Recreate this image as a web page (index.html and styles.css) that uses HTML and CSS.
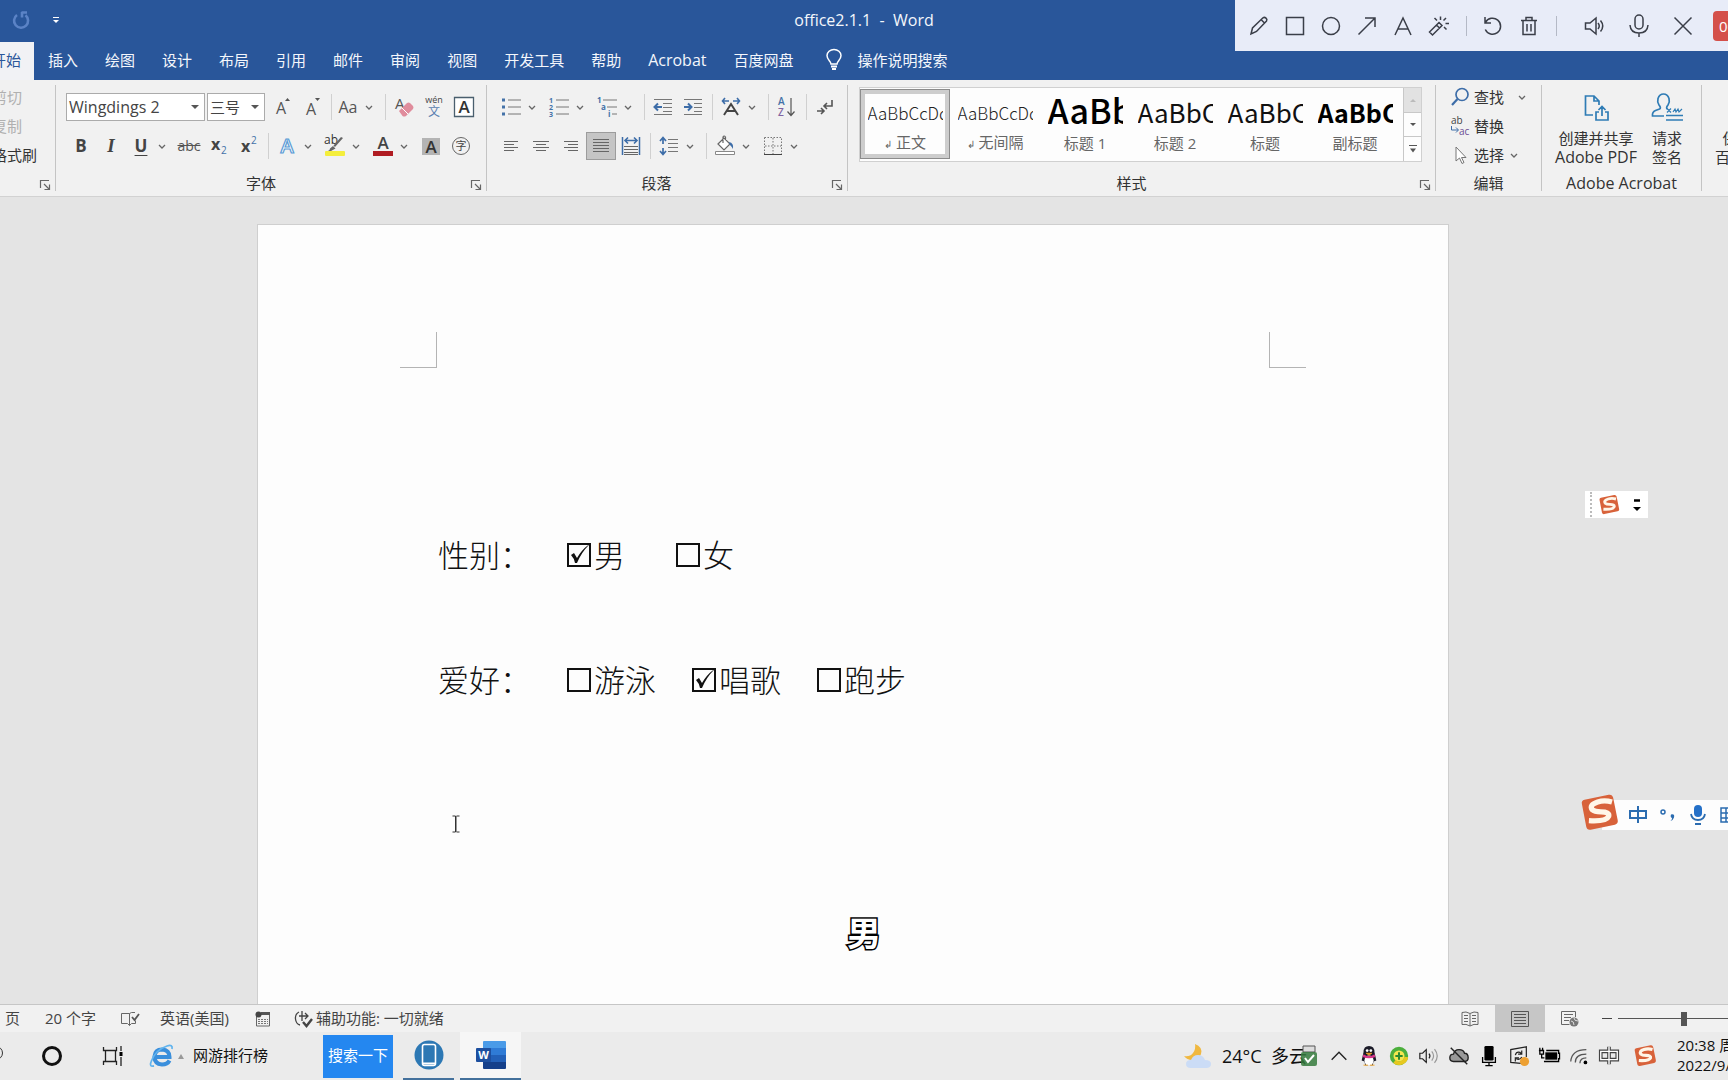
FILE: index.html
```html
<!DOCTYPE html>
<html lang="zh-CN">
<head>
<meta charset="utf-8">
<title>office2.1.1 - Word</title>
<link rel="stylesheet" href="styles.css">
</head>
<body>
<svg class="defs" aria-hidden="true">
  <symbol id="caret" viewBox="0 0 12 12"><path d="M3 5l3 3 3-3" fill="none" stroke="#666" stroke-width="1.3"/></symbol>
  <symbol id="launch" viewBox="0 0 12 12"><path d="M1.500 9V1.500H10M5 5l5 5M10.500 5.500v5h-5" fill="none" stroke="#666" stroke-width="1.2"/></symbol>
  <symbol id="sogou" viewBox="0 0 40 40"><path d="M5 8q-3 .7-2.400 3.600l4 21q.7 3.200 4 2.600l22-4.600q3.200-.8 2.600-4L31 6q-.8-3.200-4-2.600z" fill="#d8623a"/><path d="M30 10q-7-2-13 0-8 2.500-5 7 2 2 8 2 8 0 7 4-2 5-18 4" fill="none" stroke="#fff6e8" stroke-width="4.800"/></symbol>
</svg>

<header class="header">
  <div class="titlebar">
    <div class="quick">
      <button class="plain" aria-label="重复"><svg width="18" height="18" viewBox="0 0 18 18"><path d="M5 4a7 7 0 1 0 8.500.3M10 1v5.500M9.500 1.500H15" fill="none" stroke="#5b83c6" stroke-width="2.600"/></svg></button>
      <button class="plain" aria-label="自定义"><svg width="8" height="8" viewBox="0 0 8 8"><path d="M1 1.500h6" stroke="#fff"/><path d="M1 4h6L4 7z" fill="#fff"/></svg></button>
    </div>
    <div class="title">office2.1.1&nbsp; -&nbsp; Word</div>
  </div>
  <nav class="tabs">
    <button class="tab active">开始</button><button class="tab">插入</button><button class="tab">绘图</button><button class="tab">设计</button><button class="tab">布局</button><button class="tab">引用</button><button class="tab">邮件</button><button class="tab">审阅</button><button class="tab">视图</button><button class="tab">开发工具</button><button class="tab">帮助</button><button class="tab latin">Acrobat</button><button class="tab">百度网盘</button>
    <button class="tab tell"><svg width="18" height="22" viewBox="0 0 18 22"><path d="M6 15c0-3-4-4-4-8.500a7 6 0 0 1 14 0C16 11 12 12 12 15z" fill="none" stroke="#fff" stroke-width="1.500"/><path d="M6 17.500h6M7 20h4" stroke="#fff" stroke-width="1.800"/></svg>操作说明搜索</button>
  </nav>
</header>

<div class="recorder">
  <button class="tool" aria-label="画笔"><svg width="20" height="20" viewBox="0 0 20 20"><path d="M2 18l1.500-6L14 1.800q1.500-1 3 .3t.5 3L7.500 15.500zM12.500 4l3.500 3.500"/></svg></button>
  <button class="tool" aria-label="矩形"><svg width="20" height="20" viewBox="0 0 20 20"><path d="M1.500 1.500h17v17h-17z"/></svg></button>
  <button class="tool" aria-label="圆形"><svg width="20" height="20" viewBox="0 0 20 20"><circle cx="10" cy="10" r="8.500"/></svg></button>
  <button class="tool" aria-label="箭头"><svg width="20" height="20" viewBox="0 0 20 20"><path d="M1.500 18.500l16-16M8 2h10v9"/></svg></button>
  <button class="tool" aria-label="文字"><svg width="20" height="20" viewBox="0 0 20 20"><path d="M2 19L10 2l8 17M5 13h10"/></svg></button>
  <button class="tool" aria-label="魔棒"><svg width="22" height="20" viewBox="0 0 22 20"><path d="M1.500 16L11 6.500l3 3L4.500 19zM8.500 9l3 3M12.500.5V4M6.500 2l2.500 2.500M18 2l-2.500 2.500M17.500 7.500H21M16 11l2.500 2.500"/></svg></button>
  <span class="bar"></span>
  <button class="tool" aria-label="撤销"><svg width="20" height="20" viewBox="0 0 20 20"><path d="M2 1v6h6M2.500 6.500a8 8 0 1 1-.2 7"/></svg></button>
  <button class="tool" aria-label="删除"><svg width="18" height="20" viewBox="0 0 18 20"><path d="M1 4.500h16M3 5v13.500h12V5M6 4V1.500h6V4M7 8v7.500M11 8v7.500"/></svg></button>
  <span class="bar"></span>
  <button class="tool wide first" aria-label="声音"><svg width="22" height="20" viewBox="0 0 22 20"><path d="M1.500 7v6H6l6 5V2L6 7zM14 7q2.500 3 0 6M16.500 4.500q4.500 5.500 0 11"/></svg></button>
  <button class="tool wide" aria-label="麦克风"><svg width="20" height="24" viewBox="0 0 20 24"><rect x="6" y="1" width="8" height="14" rx="4"/><path d="M1 11q.5 8 9 8t9-8M10 19v4"/></svg></button>
  <button class="tool wide" aria-label="关闭"><svg width="20" height="20" viewBox="0 0 20 20"><path d="M1.500 1.500l17 17M18.500 1.500l-17 17"/></svg></button>
  <span class="timer">00:00</span>
</div>

<main class="ribbon">
  <section class="group clip">
    <div class="stack">
      <button class="plain off">剪切</button>
      <button class="plain off">复制</button>
      <button class="plain">格式刷</button>
    </div>
    <div class="foot"><svg class="launch"><use href="#launch"/></svg></div>
  </section>

  <section class="group font">
    <div class="row">
      <button class="combo family">Wingdings 2<span class="tri"></span></button>
      <button class="combo size">三号<span class="tri"></span></button>
      <button class="cell first" aria-label="增大字号"><svg width="22" height="24" viewBox="0 0 22 24"><text x="3" y="19" class="ga">A</text><path d="M12 6l2.500-3L17 6z" fill="#555"/></svg></button>
      <button class="cell" aria-label="减小字号"><svg width="22" height="24" viewBox="0 0 22 24"><text x="3" y="20" class="ga">A</text><path d="M12 3l2.500 3L17 3z" fill="#555"/></svg></button>
      <span class="sep thin"></span>
      <button class="cell mid">Aa</button><button class="drop" aria-label="展开"><svg><use href="#caret"/></svg></button>
      <span class="sep"></span>
      <button class="cell" aria-label="清除格式"><svg width="22" height="24" viewBox="0 0 22 24"><text x="2" y="14" font-size="15" fill="#555">A</text><path d="M6 16l8-8q1.500-1 3 0l3 3q1 1.500 0 3l-7 7q-2 1-3.500 0z" fill="#e08c9c"/><path d="M9 13l6 6" stroke="#fff"/></svg></button>
      <button class="cell" aria-label="拼音"><svg width="22" height="24" viewBox="0 0 22 24"><text x="11" y="8" text-anchor="middle" font-size="9" fill="#444">wén</text><text x="11" y="21" text-anchor="middle" font-size="12" fill="#5a7fb0">文</text></svg></button>
      <button class="cell" aria-label="字符边框"><svg width="22" height="22" viewBox="0 0 22 22"><path d="M1.500 1.500h19v19h-19z" fill="#fff" stroke="#4a5f6e" stroke-width="1.300"/><text x="11" y="17" text-anchor="middle" font-size="17" font-weight="600" fill="#333">A</text></svg></button>
    </div>
    <div class="row">
      <button class="cell big b">B</button>
      <button class="cell big i">I</button>
      <button class="cell big u">U</button><button class="drop" aria-label="展开"><svg><use href="#caret"/></svg></button>
      <button class="cell s">abc</button>
      <button class="cell" aria-label="下标"><svg width="20" height="20" viewBox="0 0 20 20"><text x="2" y="14" font-size="16" font-weight="700" fill="#444">x</text><text x="12" y="18" font-size="10" fill="#4472a8">2</text></svg></button>
      <button class="cell" aria-label="上标"><svg width="20" height="20" viewBox="0 0 20 20"><text x="2" y="16" font-size="16" font-weight="700" fill="#444">x</text><text x="12" y="8" font-size="10" fill="#4472a8">2</text></svg></button>
      <span class="sep"></span>
      <button class="cell" aria-label="文本效果"><svg width="22" height="24" viewBox="0 0 22 24"><text x="11" y="19" text-anchor="middle" font-size="20" font-weight="600" fill="#fff" stroke="#5b9bd5" stroke-width="1.200">A</text></svg></button><button class="drop" aria-label="展开"><svg><use href="#caret"/></svg></button>
      <button class="cell" aria-label="突出显示"><svg width="24" height="24" viewBox="0 0 24 24"><text x="1" y="10" font-size="12" fill="#333">ab</text><path d="M20 4L12 13l-1.500-1.500L18 3zM10 12l2.500 2.500L8 17H5q2-1 2-2.500z" fill="#666"/><rect x="2" y="17" width="20" height="5" rx="1" fill="#f4ee3c"/></svg></button><button class="drop" aria-label="展开"><svg><use href="#caret"/></svg></button>
      <button class="cell" aria-label="字体颜色"><svg width="22" height="24" viewBox="0 0 22 24"><text x="11" y="15" text-anchor="middle" font-size="17" font-weight="600" fill="#444">A</text><path d="M1 17h20v5H1z" fill="#b01c22"/></svg></button><button class="drop" aria-label="展开"><svg><use href="#caret"/></svg></button>
      <button class="cell" aria-label="字符底纹"><svg width="18" height="20" viewBox="0 0 18 20"><path d="M0 2h18v17H0z" fill="#b4b4b4"/><text x="9" y="17" text-anchor="middle" font-size="17" font-weight="600" fill="#333">A</text></svg></button>
      <button class="cell" aria-label="带圈字符"><svg width="20" height="20" viewBox="0 0 20 20"><circle cx="10" cy="10" r="8.500" fill="none" stroke="#666"/><text x="10" y="14" text-anchor="middle" font-size="11" fill="#444">字</text></svg></button>
    </div>
    <div class="foot">字体<svg class="launch"><use href="#launch"/></svg></div>
  </section>

  <section class="group para">
    <div class="row">
      <button class="cell" aria-label="项目符号"><svg width="20" height="20" viewBox="0 0 20 20"><path d="M7 3h13M7 10h13M7 17h13" stroke="#777"/><path d="M1 3h3M1 10h3M1 17h3" stroke="#4472a8" stroke-width="3"/></svg></button><button class="drop" aria-label="展开"><svg><use href="#caret"/></svg></button>
      <button class="cell" aria-label="编号"><svg width="20" height="20" viewBox="0 0 20 20"><path d="M7 3h13M7 10h13M7 17h13" stroke="#777"/><g font-size="7" font-weight="700" fill="#4472a8"><text x="0" y="6">1</text><text x="0" y="13">2</text><text x="0" y="20">3</text></g></svg></button><button class="drop" aria-label="展开"><svg><use href="#caret"/></svg></button>
      <button class="cell" aria-label="多级列表"><svg width="20" height="20" viewBox="0 0 20 20"><path d="M6 3h14M10 10h10M15 17h5" stroke="#777"/><g font-size="8" font-weight="700" fill="#4472a8"><text x="0" y="6">1</text><text x="4" y="13">a</text><text x="11" y="20">i</text></g></svg></button><button class="drop" aria-label="展开"><svg><use href="#caret"/></svg></button>
      <span class="sep"></span>
      <button class="cell" aria-label="减少缩进"><svg width="20" height="18" viewBox="0 0 20 18"><path d="M1 1.500h18M10 5.500h9M10 9.500h9M10 13.500h9M1 16.500h18" stroke="#777"/><path d="M9 9H2M5 5.500L1.500 9 5 12.500" fill="none" stroke="#3d6da8" stroke-width="2"/></svg></button>
      <button class="cell" aria-label="增加缩进"><svg width="20" height="18" viewBox="0 0 20 18"><path d="M1 1.500h18M11 5.500h8M11 9.500h8M11 13.500h8M1 16.500h18" stroke="#777"/><path d="M1 9h7M5 5.500L8.500 9 5 12.500" fill="none" stroke="#3d6da8" stroke-width="2"/></svg></button>
      <span class="sep"></span>
      <button class="cell" aria-label="中文版式"><svg width="20" height="20" viewBox="0 0 20 20"><path d="M8 4H1.500M4 1L1.500 4 4 7M12 4h6.500M16 1l2.500 3L16 7" fill="none" stroke="#3d6da8" stroke-width="1.600"/><path d="M3 18L10 7l7 11M6 14h8" fill="none" stroke="#444" stroke-width="2"/></svg></button><button class="drop" aria-label="展开"><svg><use href="#caret"/></svg></button>
      <span class="sep"></span>
      <button class="cell" aria-label="排序"><svg width="20" height="20" viewBox="0 0 20 20"><text x="1" y="8" font-size="10" font-weight="600" fill="#4472a8">A</text><text x="1" y="19" font-size="10" font-weight="600" fill="#8064a2">Z</text><path d="M14 1v17M10.500 14.500L14 18.500l3.500-4" fill="none" stroke="#555" stroke-width="1.200"/></svg></button>
      <span class="sep"></span>
      <button class="cell" aria-label="编辑标记"><svg width="18" height="18" viewBox="0 0 18 18"><path d="M16 2v6H8M11 5L8 8l3 3M1 13h7M5 10l3 3-3 3" fill="none" stroke="#555" stroke-width="1.600"/></svg></button>
    </div>
    <div class="row">
      <button class="cell" aria-label="左对齐"><svg width="16" height="14" viewBox="0 0 16 14"><path d="M1 2.500h14M1 5.500h10M1 8.500h14M1 11.500h10" stroke="#666"/></svg></button>
      <button class="cell" aria-label="居中"><svg width="16" height="14" viewBox="0 0 16 14"><path d="M0 2.500h16M3 5.500h10M0 8.500h16M3 11.500h10" stroke="#666"/></svg></button>
      <button class="cell" aria-label="右对齐"><svg width="16" height="14" viewBox="0 0 16 14"><path d="M1 2.500h14M5 5.500h10M1 8.500h14M5 11.500h10" stroke="#666"/></svg></button>
      <button class="cell pressed" aria-label="两端对齐"><svg width="16" height="16" viewBox="0 0 16 16"><path d="M0 1.500h16M0 4.500h16M0 7.500h16M0 10.500h16M0 13.500h16" stroke="#666"/></svg></button>
      <button class="cell" aria-label="分散对齐"><svg width="20" height="20" viewBox="0 0 20 20"><path d="M1.500 1v18M18.500 1v18" stroke="#3d6da8" stroke-width="1.500"/><path d="M4 4.500h12M7 1.500l-3 3 3 3M13 1.500l3 3-3 3" fill="none" stroke="#3d6da8" stroke-width="1.600"/><path d="M3 10.500h14M3 13.500h14M3 16.500h14M3 18.500h14" stroke="#666"/></svg></button>
      <span class="sep"></span>
      <button class="cell" aria-label="行距"><svg width="20" height="20" viewBox="0 0 20 20"><path d="M9 3.500h10M9 7.500h10M9 11.500h10M9 15.500h10" stroke="#777"/><path d="M4 2v6M1 5l3-3.500L7 5M4 18v-6M1 15l3 3.500L7 15" fill="none" stroke="#3d6da8" stroke-width="1.700"/></svg></button><button class="drop" aria-label="展开"><svg><use href="#caret"/></svg></button>
      <span class="sep"></span>
      <button class="cell" aria-label="底纹"><svg width="22" height="22" viewBox="0 0 22 22"><path d="M4 9l6-6 6 6-6 6zM9 8V2q1-2 2.500 0v3" fill="#fff" stroke="#666" stroke-width="1.200"/><path d="M15 7q5 1 4 7-1-2-3-4z" fill="#3d6da8"/><path d="M1.500 16.500h19v3h-19z" fill="#fff" stroke="#888"/></svg></button><button class="drop" aria-label="展开"><svg><use href="#caret"/></svg></button>
      <button class="cell" aria-label="边框"><svg width="18" height="18" viewBox="0 0 18 18"><path d="M.5.500h17v17M.5.500v17M9 1v16M1 9h16" fill="none" stroke="#777" stroke-dasharray="1.500 1.500"/><path d="M0 17.500h18" stroke="#444"/></svg></button><button class="drop" aria-label="展开"><svg><use href="#caret"/></svg></button>
    </div>
    <div class="foot">段落<svg class="launch"><use href="#launch"/></svg></div>
  </section>

  <section class="group styles">
    <div class="gallery">
      <button class="style on"><span class="sample">AaBbCcDd</span><span class="name"><small>↲</small> 正文</span></button>
      <button class="style"><span class="sample">AaBbCcDd</span><span class="name"><small>↲</small> 无间隔</span></button>
      <button class="style"><span class="sample h1">AaBb</span><span class="name">标题 1</span></button>
      <button class="style"><span class="sample h2">AaBbC</span><span class="name">标题 2</span></button>
      <button class="style"><span class="sample h2">AaBbC</span><span class="name">标题</span></button>
      <button class="style"><span class="sample h2 bold">AaBbC</span><span class="name">副标题</span></button>
      <div class="scroller">
        <button aria-label="上" class="dim"><svg width="6" height="4" viewBox="0 0 6 4"><path d="M0 4l3-3 3 3z" fill="#bbb"/></svg></button>
        <button aria-label="下"><svg width="6" height="4" viewBox="0 0 6 4"><path d="M0 0l3 3 3-3z" fill="#555"/></svg></button>
        <button aria-label="更多"><svg width="8" height="8" viewBox="0 0 8 8"><path d="M0 .5h8" stroke="#555"/><path d="M1 3.500l3 4 3-4z" fill="#555"/></svg></button>
      </div>
    </div>
    <div class="foot">样式<svg class="launch"><use href="#launch"/></svg></div>
  </section>

  <section class="group edit">
    <div class="stack">
      <button class="plain"><svg width="20" height="20" viewBox="0 0 20 20"><circle cx="12" cy="7.500" r="6" fill="none" stroke="#3d6da8" stroke-width="1.700"/><path d="M7.500 12L2 18" stroke="#3d6da8" stroke-width="2.200"/></svg>查找<svg class="c gap"><use href="#caret"/></svg></button>
      <button class="plain"><svg width="20" height="20" viewBox="0 0 20 20"><text x="1" y="8" font-size="10" fill="#444">ab</text><text x="9" y="19" font-size="10" fill="#6a4c93">ac</text><path d="M1.500 10v4H8M6 11.500L8.500 14 6 16.500" fill="none" stroke="#3d6da8"/></svg>替换</button>
      <button class="plain"><svg width="20" height="20" viewBox="0 0 20 20"><path d="M6 2v14l3.500-3 2.500 5.500 2-1-2.500-5H16z" fill="#fff" stroke="#777"/></svg>选择<svg class="c"><use href="#caret"/></svg></button>
    </div>
    <div class="foot">编辑</div>
  </section>

  <section class="group acro">
    <div class="tiles">
      <button class="tile"><svg width="28" height="30" viewBox="0 0 28 30"><path d="M11 22H3.500V3H12l5 5v4M12 3v5h5M17 19h-3v8h12v-8h-3M20 23v-9M16.500 17L20 13.500l3.500 3.500" fill="none" stroke="#2f7cb5" stroke-width="1.700"/></svg>创建并共享<br><span class="latin">Adobe PDF</span></button>
      <button class="tile"><svg width="32" height="30" viewBox="0 0 32 30"><path d="M13 23H1.500q-.5-4 3-5.500l4-1.500q2-1-.5-4-2-3-1-6.500Q8.500 1 12.500 1T18 5.500q1 3.500-1 6.500-2.500 3-.5 4M15 22.500h17M15 27h17" fill="none" stroke="#2f7cb5" stroke-width="1.700"/><path d="M16 15.500l4 4M20 15.500l-4 4M22 19l2-3 1 3 2-3 1 3 3-3" fill="none" stroke="#2f7cb5" stroke-width="1.200"/></svg>请求<br>签名</button>
    </div>
    <div class="foot latin">Adobe Acrobat</div>
  </section>

  <section class="group pan">
    <button class="tile"><svg width="28" height="30"></svg>保存到<br>百度网盘</button>
  </section>
</main>

<div class="canvas">
  <article class="paper">
    <div class="marks"><i class="mark l"></i><i class="mark r"></i></div>
    <form class="form">
      <div class="line gender"><span class="q">性别：</span>
        <label><input type="checkbox" checked>男</label><label><input type="checkbox">女</label></div>
      <div class="line"><span class="q">爱好：</span>
        <label><input type="checkbox">游泳</label><label><input type="checkbox" checked>唱歌</label><label><input type="checkbox">跑步</label></div>
    </form>
    <svg class="ibeam" width="8" height="18" viewBox="0 0 8 18"><path d="M.5 1h3v16h-3M7.500 1h-3M4.500 17h3M4 1v16" fill="none" stroke="#333"/></svg>
  </article>
  <div class="subtitle">男</div>
  <div class="mini">
    <span class="grip"></span><svg width="24" height="24"><use href="#sogou"/></svg>
    <svg width="8" height="14" viewBox="0 0 8 14"><path d="M1 2.500h6" stroke="#000" stroke-width="2.500"/><path d="M0 9h8l-4 4z"/></svg>
  </div>
  <div class="ime">
    <svg class="logo" width="44" height="44"><use href="#sogou"/></svg>
    <svg width="18" height="18" viewBox="0 0 18 18"><path d="M1 5h16v7H1zM9 0v17" fill="none" stroke="#2b6cb0" stroke-width="2"/></svg>
    <svg width="18" height="18" viewBox="0 0 18 18"><circle cx="4" cy="6" r="2" fill="none" stroke="#2b6cb0" stroke-width="1.500"/><path d="M12 8.500q4-1 3 3-1 3-3.500 3.500 2-2 1.500-3-2-1-1-3.500z" fill="#2b6cb0"/></svg>
    <svg width="18" height="20" viewBox="0 0 18 20"><rect x="5" y="0" width="8" height="12" rx="4" fill="#2470c8"/><path d="M2 9q1 6 7 6t7-6M6 19h6" fill="none" stroke="#2b6cb0" stroke-width="1.800"/></svg>
    <svg width="18" height="18" viewBox="0 0 18 18"><path d="M2 2h15v14H2zM2 7h15M2 12h15M7 2v14M12 2v14" fill="none" stroke="#2b6cb0" stroke-width="1.500"/></svg>
  </div>
</div>

<footer class="status">
  <span class="page">页</span><span class="words">20 个字</span>
  <svg class="proof" width="20" height="16" viewBox="0 0 20 16"><path d="M9.500 2.500H1.500v10h6l2 2zM9.500 2.500l2-1H15M9.500 14.500l2-2h4v-3" fill="none" stroke="#666"/><path d="M12 6l2.500 3L19 3" fill="none" stroke="#555" stroke-width="1.800"/></svg>
  <span class="lang">英语(美国)</span>
  <svg class="macro" width="16" height="16" viewBox="0 0 16 16"><path d="M1.500 4v11h13V3.500H6" fill="none" stroke="#666"/><path d="M6 1h9v3H6z" fill="#555"/><circle cx="3.500" cy="3.500" r="3" fill="#444"/><path d="M3 8.500h10M3 10.500h10M3 12.500h10" stroke="#777" stroke-dasharray="2 1"/></svg>
  <svg class="acc" width="20" height="18" viewBox="0 0 20 18"><path d="M5 2Q1 4 1.500 9T6 15M8 1v6M5 6h9M11 3l3 3-3 3M8 7v4" fill="none" stroke="#444" stroke-width="1.300"/><path d="M9 12l3.500 4L18 9" fill="none" stroke="#444" stroke-width="2.400"/></svg>
  <span>辅助功能: 一切就绪</span>
  <div class="views">
    <button class="view" aria-label="阅读视图"><svg width="18" height="16" viewBox="0 0 18 16"><path d="M9 2.500Q5 0 1 1.500v12q4-1 8 1.500 4-2.500 8-1.500v-12Q13 0 9 2.500zM9 3v12M3 4.500h4M3 7.500h4M3 10.500h4M11 4.500h4M11 7.500h4M11 10.500h4" fill="none" stroke="#666"/></svg></button>
    <button class="view on" aria-label="页面视图"><svg width="18" height="16" viewBox="0 0 18 16"><path d="M.5.500h17v15H.5zM3 3.500h12M3 6.500h12M3 9.500h12M3 12.500h12" fill="none" stroke="#555"/></svg></button>
    <button class="view" aria-label="Web 视图"><svg width="18" height="16" viewBox="0 0 18 16"><path d="M14.500 6V.5H.5v13h8M3 3.500h9M3 6.500h7M3 9.500h5" fill="none" stroke="#666"/><circle cx="13" cy="11" r="4.500" fill="#777"/><path d="M10 10q3 0 3 4M13 7q0 3 4 3" fill="none" stroke="#ddd"/></svg></button>
    <span class="minus"></span>
    <input class="zoom" type="range" min="0" max="100" value="50" aria-label="缩放">
  </div>
</footer>

<footer class="taskbar">
  <span class="search"></span>
  <span class="ring"></span>
  <svg class="tv" width="20" height="20" viewBox="0 0 20 20"><path d="M.5 1v3.500h13V1M2.500 4.500v11M12.500 4.500v11M.5 19v-3.500h13V19M18 0v5M18 11v9" fill="none" stroke="#222" stroke-width="1.300"/><path d="M18 6v4" stroke="#000" stroke-width="3"/></svg>
  <svg class="ie" width="24" height="24" viewBox="0 0 24 24"><path d="M20.500 16.500Q18.500 20.500 13 20.500 5.500 20 5.500 12.500 6 5.500 13 5.500q7.500.5 7.500 7.500H7" fill="none" stroke="#3a8fdc" stroke-width="4"/><path d="M5 22q-5 1-3-4Q6 6 18 2q6-2 5 3" fill="none" stroke="#62b4ee" stroke-width="1.800"/></svg>
  <svg class="up" width="6" height="6" viewBox="0 0 6 6"><path d="M0 6l3-5 3 5z" fill="#999"/></svg>
  <span class="news">网游排行榜</span>
  <button class="go">搜索一下</button>
  <button class="app" aria-label="手机"><svg width="30" height="30" viewBox="0 0 30 30"><circle cx="15" cy="15" r="14.500" fill="#2c78b4"/><rect x="8.500" y="4.500" width="13" height="21" rx="2" fill="none" stroke="#fff" stroke-width="1.600"/><path d="M8 22.500h14v2H8z" fill="#fff"/></svg></button>
  <button class="app word" aria-label="Word"><svg width="30" height="28" viewBox="0 0 30 28"><path d="M7 1q0-1 1-1h21q1 0 1 1v6H7z" fill="#4a9be8"/><path d="M7 7h23v7H7z" fill="#2f7bd6"/><path d="M7 14h23v7H7z" fill="#2260b8"/><path d="M7 21h23v6q0 1-1 1H8q-1 0-1-1z" fill="#143f8a"/><rect y="7" width="15" height="14" rx="1" fill="#1d4f9f"/><text x="7.500" y="18" text-anchor="middle" font-size="11" font-weight="700" fill="#fff">W</text></svg></button>
  <div class="tray">
    <svg class="moon" width="28" height="26" viewBox="0 0 28 26"><path d="M12 1q8 3 6 10-2 6-9 6-5 0-8-4 6 1 9-3 3-4 2-9z" fill="#f0b840"/><path d="M8 25q-5 0-5-4t5-4q2-5 7-5t7 5q6 0 6 4t-5 4z" fill="#cbdcf6"/></svg>
    <span class="weather">24°C&nbsp; 多云<svg class="usb" width="16" height="22" viewBox="0 0 16 22"><path d="M2 1h12v6H2z" fill="#ddd" stroke="#555"/><rect y="7" width="16" height="14" rx="2" fill="#357a3c" fill-opacity=".85"/><path d="M4 13l3 4 6-7" fill="none" stroke="#fff" stroke-width="2"/></svg></span>
    <svg class="t" viewBox="0 0 24 24"><path d="M4 16l8-8 8 8" fill="none" stroke="#222" stroke-width="1.500"/></svg>
    <svg class="t" viewBox="0 0 24 24"><path d="M6 8q0-7 6-7t6 7l2 9-3 1-1 4H8l-1-4-3-1z" fill="#1b1b28"/><ellipse cx="12" cy="17" rx="5" ry="5.500" fill="#fff"/><path d="M6 10q6 4 12 0l1 3q-7 3-14 0z" fill="#d8378a"/><circle cx="10" cy="6" r="1.500" fill="#fff"/><circle cx="14" cy="6" r="1.500" fill="#fff"/><path d="M9 9h6l-3 2zM6 22h5M13 22h5" fill="#f0a020" stroke="#f0a020"/></svg>
    <svg class="t" viewBox="0 0 24 24"><circle cx="12" cy="12" r="8" fill="#f5e650" stroke="#4caf3c" stroke-width="4"/><path d="M20 13a8 8 0 0 1-13 5" fill="none" stroke="#e8c820" stroke-width="4"/><path d="M12 8v8M8 12h8" stroke="#2c8a30" stroke-width="2.200"/></svg>
    <svg class="t" viewBox="0 0 24 24"><path d="M2 9v6h3l4 4V5L5 9zM12 9.500q2 2.500 0 5" fill="none" stroke="#222" stroke-width="1.300"/><path d="M15 7q4 5 0 10M18 4.500q6 7.500 0 15" fill="none" stroke="#999" stroke-width="1.300"/></svg>
    <svg class="t" viewBox="0 0 24 24"><path d="M6 18q-4 0-4-4t4-4q1-5 6-5t6 4q4 0 4 5 0 4-4 4z" fill="#999" stroke="#222" stroke-width="1.500"/><path d="M3 3l18 18" stroke="#222" stroke-width="1.600"/></svg>
    <svg class="t" viewBox="0 0 24 24"><rect x="7" y="1" width="10" height="16" rx="1.500"/><path d="M5 13v6h14v-6M12 19v4M8 22.500h8" fill="none" stroke="#000" stroke-width="1.400"/></svg>
    <svg class="t" viewBox="0 0 24 24"><path d="M14 20L3 19V5l17-3v11" fill="none" stroke="#222" stroke-width="1.300"/><path d="M8 11q1-4 5-3l2 2M15 6v4h-4M15 13q-2 4-6 2M8 18v-4h4" fill="none" stroke="#222" stroke-width="1.300"/><circle cx="18" cy="18" r="5" fill="#eda032"/></svg>
    <svg class="t" viewBox="0 0 24 24"><path d="M8 8h13v8H8z"/><path d="M6.500 18h16v-3h1v-6h-1V6H9M1 6h5v4H2V6M2 3v3M5 3v3M4 10v4h3" fill="none" stroke="#000" stroke-width="1.400"/></svg>
    <svg class="t" viewBox="0 0 24 24"><path d="M3 18Q4 5 20 5M8 19Q8 10 20 10M13 20q0-6 7-6" fill="none" stroke="#555" stroke-width="1.400"/><circle cx="19" cy="19" r="2"/></svg>
    <svg class="t" viewBox="0 0 24 24"><path d="M3 7h18v9H3zM12 2v19" fill="none" stroke="#444" stroke-width="4"/><path d="M3 7h18v9H3zM12 2v19" fill="none" stroke="#fff" stroke-width="1.500"/></svg>
    <svg class="so" width="26" height="26"><use href="#sogou"/></svg>
    <div class="clock"><span>20:38 周二</span><span>2022/9/13</span></div>
  </div>
</footer>
</body>
</html>
```
FILE: styles.css
```css
* { box-sizing: border-box; }
body {
  margin: 0; height: 100vh; display: flex; flex-direction: column; overflow: hidden;
  font: 15px/20px "Open Sans", "Noto Sans CJK SC", sans-serif; color: #333; background: #e4e4e4;
  position: relative;
}
button { font: inherit; color: inherit; background: none; border: 0; padding: 0; margin: 0; white-space: nowrap; }
svg { display: block; flex: none; overflow: visible; }
.defs { position: absolute; width: 0; height: 0; }
.latin { font-size: 16px; }

.header { background: #29569a; color: #f4f7fc; flex: none; }
.titlebar { height: 42px; display: flex; align-items: center; justify-content: center; position: relative; }
.title { font-size: 16px; line-height: 38px; padding-bottom: 2px; }
.quick { position: absolute; left: 12px; top: 11px; display: flex; align-items: center; gap: 22px; }
.tabs { display: flex; height: 38px; }
.tab { padding: 0 13px 0 14px; line-height: 36px; height: 38px; padding-bottom: 2px; }
.tab.active { background: #f1f2f5; color: #2b579a; margin-left: -23px; }
.tab.tell { display: flex; align-items: center; gap: 15px; padding-left: 18px; }

.recorder {
  position: absolute; top: 0; right: 0; width: 493px; height: 51px; padding-left: 6px;
  display: flex; align-items: center; background: #e8ecf8; overflow: hidden;
}
.tool { width: 36px; flex: none; display: flex; justify-content: center; }
.tool svg { fill: none; stroke: #3a3e48; stroke-width: 1.5; }
.tool.wide { width: 44px; }
.tool.first { margin-left: 8px; }
.bar { width: 18px; height: 20px; flex: none; background: linear-gradient(#b4b9c6, #b4b9c6) center / 1px 100% no-repeat; }
.timer { margin-left: 8px; padding: 0 6px; height: 30px; line-height: 30px; border-radius: 4px; background: #d4504a; color: #fff; }

.ribbon { flex: none; display: flex; height: 117px; padding: 5px 0; background: #f1f1f1; border-bottom: 1px solid #d2d2d2; overflow: hidden; }
.group { flex: none; display: flex; flex-direction: column; border-right: 1px solid #c4c4c4; padding-top: 8px; position: relative; }
.foot { margin-top: auto; height: 13px; line-height: 11px; text-align: center; }
.launch { position: absolute; right: 4px; bottom: 0; width: 12px; height: 12px; }
.clip { width: 56px; padding-top: 0; }
.font { width: 431px; padding-left: 10px; }
.para { width: 361px; padding-left: 9px; }
.font .foot, .para .foot { padding-right: 30px; }
.styles { flex: 1; padding: 2px 13px 0 11px; }
.styles .foot { padding-right: 18px; }
.edit { width: 106px; padding-top: 0; }
.acro { width: 160px; }
.pan { width: 86px; margin-right: -60px; border: 0; }
.plain { display: flex; align-items: center; }
.stack { display: flex; flex-direction: column; gap: 9px; padding-top: 2px; }
.clip .stack { margin-left: -8px; }
.off { color: #b0b0b0; }
.edit .stack { padding-left: 14px; }
.edit .plain { gap: 4px; }
.edit .c { width: 12px; height: 12px; }
.edit .gap { margin-left: 8px; }

.row { display: flex; align-items: center; height: 28px; margin-bottom: 11px; }
.cell { width: 30px; height: 28px; flex: none; display: flex; align-items: center; justify-content: center; color: #555; }
.cell.first { margin-left: 4px; }
.drop { width: 12px; margin-right: 6px; flex: none; }
.drop svg { width: 12px; height: 12px; }
.sep { width: 8px; height: 26px; flex: none; background: linear-gradient(#d0d0d0, #d0d0d0) center / 1px 100% no-repeat; }
.sep.thin { width: 4px; }
.ga { font-size: 16px; fill: #555; }
.mid { font-size: 16px; }
.big { font-size: 17px; font-weight: 700; color: #444; }
.i { font-family: "Liberation Serif", serif; font-style: italic; font-size: 19px; }
.u { text-decoration: underline; text-underline-offset: 3px; }
.s { font-size: 14px; text-decoration: line-through; }
.pressed { background: #c5c5c5; border: 1px solid #9c9c9c; }
.combo { height: 28px; border: 1px solid #ababab; background: #fff; display: flex; align-items: center; justify-content: space-between; padding: 0 5px 0 2px; color: #444; flex: none; }
.family { width: 139px; font-size: 16px; }
.size { width: 58px; margin-left: 2px; }
.tri { border: 4px solid transparent; border-top-color: #555; border-bottom: 0; }

.gallery { display: flex; height: 75px; border: 1px solid #d0d0d0; background: #fdfdfd; overflow: hidden; }
.style { width: 90px; margin-top: 1px; height: 70px; display: flex; flex-direction: column; align-items: center; padding: 5px 0; flex: none; border: 0; }
.style.on { border: 1px solid #8c8c8c; box-shadow: inset 0 0 0 4px #cdcdcd; padding: 4px 0; }
.sample { width: 75px; height: 36px; line-height: 38px; overflow: hidden; text-align: left; font-family: "Noto Sans CJK SC", sans-serif; font-size: 17px; font-weight: 300; color: #222; }
.sample.h1 { font-size: 34px; font-weight: 500; line-height: 32px; color: #000; }
.sample.h2 { font-size: 26px; font-weight: 400; line-height: 36px; color: #111; }
.sample.bold { font-weight: 700; font-size: 25px; color: #000; }
.name { line-height: 20px; margin-top: 3px; color: #666; }
.name small { font-size: 10px; }
.scroller { margin-left: auto; width: 18px; display: flex; flex-direction: column; border-left: 1px solid #c8c8c8; }
.scroller button { flex: 1; display: flex; align-items: center; justify-content: center; border-bottom: 1px solid #c8c8c8; }
.scroller button:last-child { border: 0; }
.scroller .dim { background: #e2e2e2; }

.tiles { display: flex; gap: 12px; padding-left: 11px; }
.tile { display: flex; flex-direction: column; align-items: center; line-height: 19px; }
.tile svg { margin-bottom: 6px; }
.tiles .tile:first-child { width: 86px; }

.canvas { flex: 1; min-height: 0; position: relative; padding: 27px 22px 0 0; display: flex; overflow: hidden; }
.paper { width: 100%; max-width: 1192px; margin: 0 auto; background: #fdfdfd; border: 1px solid #cfcfcf; border-bottom: 0; padding: 107px 142px 0; position: relative; }
.marks { display: flex; justify-content: space-between; }
.mark { width: 37px; height: 36px; border-bottom: 1px solid #b4b4b4; }
.mark.l { border-right: 1px solid #b4b4b4; }
.mark.r { border-left: 1px solid #b4b4b4; }
.form { margin: 168px 0 0 38px; font: 300 31px/36px "Noto Sans CJK SC", sans-serif; color: #111; display: flex; flex-direction: column; gap: 85px; }
.line { display: flex; align-items: center; gap: 36px; height: 40px; }
.line.gender { gap: 51px; }
.q { width: 129px; margin-right: -36px; height: 40px; }
.gender .q { margin-right: -51px; }
.line label { display: flex; gap: 3px; height: 40px; }
.line input { appearance: none; width: 24px; height: 24px; margin: 7px 0 0; border: 2px solid #111; }
.line input:checked { background: url("data:image/svg+xml,%3Csvg xmlns='http://www.w3.org/2000/svg' viewBox='0 0 24 24'%3E%3Cpath d='M4 12l3-2 3 5Q15 6 24 0 15 8 10 20H8Q7 15 4 12z' fill='%23111'/%3E%3C/svg%3E") border-box; background-origin: border-box; }
.ibeam { position: absolute; left: 194px; top: 590px; }
.subtitle { position: absolute; left: 0; right: 0; bottom: 48px; text-align: center; font: 700 34px/48px "Noto Sans CJK SC", sans-serif; color: #fff; -webkit-text-stroke: 3px #000; paint-order: stroke fill; }
.mini { position: absolute; right: 80px; top: 294px; width: 63px; height: 27px; background: #fff; display: flex; align-items: center; gap: 11px; padding-left: 5px; }
.grip { height: 25px; border-left: 2px dotted #bbb; margin-right: -5px; }
.ime { position: absolute; right: 0; top: 603px; width: 126px; height: 30px; background: #fdfdfd; display: flex; align-items: center; gap: 12px; }
.ime .logo { margin: -4px -6px 0 -23px; }

.status { flex: none; height: 28px; display: flex; align-items: center; background: #f1f1f1; border-top: 1px solid #c6c6c6; overflow: hidden; white-space: nowrap; color: #444; }
.status > span { padding-bottom: 2px; }
.page { margin: 0 25px 0 5px; }
.proof { margin: 0 20px 0 24px; }
.macro { margin: 0 23px 0 26px; }
.acc { margin-right: 2px; }
.views { margin-left: auto; display: flex; align-items: center; height: 28px; }
.view { width: 50px; height: 28px; display: flex; align-items: center; justify-content: center; }
.view.on { background: #c6c6c6; }
.minus { width: 10px; height: 1px; background: #444; margin: 0 6px 0 7px; }
.zoom { appearance: none; width: 132px; height: 14px; margin: 0 -22px 0 0; background: linear-gradient(#555, #555) center / 100% 1px no-repeat; }
.zoom::-webkit-slider-thumb { appearance: none; width: 6px; height: 14px; background: #555; }

.taskbar { flex: none; height: 48px; display: flex; align-items: center; background: #ebebeb; color: #111; overflow: hidden; }
.search { width: 14px; height: 14px; border: 1px solid #333; border-radius: 7px; margin-left: -11px; margin-bottom: 6px; flex: none; }
.ring { width: 20px; height: 20px; border: 3px solid #111; border-radius: 10px; margin-left: 39px; flex: none; }
.tv { margin-left: 41px; }
.ie { margin-left: 26px; }
.up { margin: 0 9px 0 5px; }
.news { white-space: nowrap; padding-bottom: 2px; }
.go { width: 70px; height: 43px; margin: 0 10px 0 55px; padding-bottom: 2px; background: #2487f0; color: #fff; flex: none; }
.app { width: 51px; height: 48px; border-bottom: 2px solid #44719c; display: flex; align-items: center; justify-content: center; margin-right: 6px; flex: none; }
.app.word { width: 61px; background: #f6f6f6; }
.tray { margin-left: auto; display: flex; align-items: center; flex: none; margin-right: -29px; }
.weather { position: relative; font-size: 18px; margin-left: 11px; width: 102px; white-space: nowrap; }
.usb { position: absolute; right: 7px; top: -1px; }
.t { width: 22px; height: 22px; margin: 0 4px; }
.so { margin: 0 18px 0 9px; }
.clock { display: flex; flex-direction: column; width: 80px; font-size: 15px; line-height: 20px; padding-bottom: 2px; white-space: nowrap; flex: none; }
```
